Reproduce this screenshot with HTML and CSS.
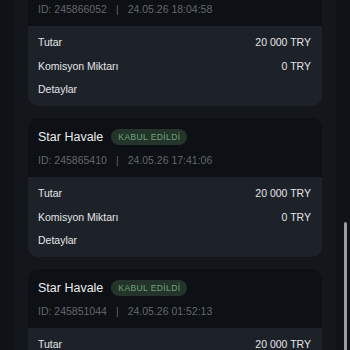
FILE: index.html
```html
<!DOCTYPE html>
<html lang="tr">
<head>
<meta charset="utf-8">
<link rel="stylesheet" href="styles.css">
</head>
<body>
<div class="page">
  <div class="list">
    <div class="card">
      <div class="card-head">
        <div class="title-row"><span class="title">Star Havale</span><span class="badge">KABUL EDİLDİ</span></div>
        <div class="meta"><span>ID: 245866052</span><span class="sep">|</span><span>24.05.26 18:04:58</span></div>
      </div>
      <div class="card-body">
        <div class="row"><span>Tutar</span><span>20 000 TRY</span></div>
        <div class="row"><span>Komisyon Miktarı</span><span>0 TRY</span></div>
        <div class="row"><span>Detaylar</span></div>
      </div>
    </div>
    <div class="card">
      <div class="card-head">
        <div class="title-row"><span class="title">Star Havale</span><span class="badge">KABUL EDİLDİ</span></div>
        <div class="meta"><span>ID: 245865410</span><span class="sep">|</span><span>24.05.26 17:41:06</span></div>
      </div>
      <div class="card-body">
        <div class="row"><span>Tutar</span><span>20 000 TRY</span></div>
        <div class="row"><span>Komisyon Miktarı</span><span>0 TRY</span></div>
        <div class="row"><span>Detaylar</span></div>
      </div>
    </div>
    <div class="card">
      <div class="card-head">
        <div class="title-row"><span class="title">Star Havale</span><span class="badge">KABUL EDİLDİ</span></div>
        <div class="meta"><span>ID: 245851044</span><span class="sep">|</span><span>24.05.26 01:52:13</span></div>
      </div>
      <div class="card-body">
        <div class="row"><span>Tutar</span><span>20 000 TRY</span></div>
        <div class="row"><span>Komisyon Miktarı</span><span>0 TRY</span></div>
        <div class="row"><span>Detaylar</span></div>
      </div>
    </div>
  </div>
</div>
<div class="scrollbar"></div>
</body>
</html>
```
FILE: styles.css
```css
html, body {
  margin: 0;
  padding: 0;
  background: #0f1216;
  height: 350px;
  overflow: hidden;
  font-family: "Liberation Sans", Arial, sans-serif;
}
.page {
  width: 322px;
  margin-left: 14px;
  background: #13171c;
  height: 400px;
  margin-top: -33px;
  padding: 0 14px;
  box-sizing: border-box;
}
.list {
  display: flex;
  flex-direction: column;
  gap: 12px;
}
.card {
  border-radius: 10px;
  overflow: hidden;
}
.card-head {
  background: #0d1014;
  padding: 11px 10px 11px;
}
.title-row {
  display: flex;
  align-items: center;
  height: 16px;
  gap: 8px;
}
.title {
  font-size: 12.5px;
  color: #ececec;
}
.badge {
  height: 16px;
  line-height: 16px;
  padding: 0 7px;
  border-radius: 8px;
  background: #24342a;
  color: #6ea47a;
  font-size: 8.5px;
  letter-spacing: 0.4px;
}
.meta {
  margin-top: 9px;
  height: 12px;
  line-height: 12px;
  font-size: 10.5px;
  color: #62676f;
  display: flex;
}
.sep {
  margin: 0 9px;
}
.card-body {
  background: #1d2229;
  padding: 9px 11px 10px 10px;
  display: flex;
  flex-direction: column;
  gap: 9.5px;
}
.row {
  display: flex;
  justify-content: space-between;
  height: 14px;
  line-height: 14px;
  font-size: 10.5px;
  color: #e4e5e7;
}
.scrollbar {
  position: absolute;
  left: 344px;
  top: 222px;
  width: 3px;
  height: 140px;
  border-radius: 2px;
  background: #9a9ca1;
}
```
